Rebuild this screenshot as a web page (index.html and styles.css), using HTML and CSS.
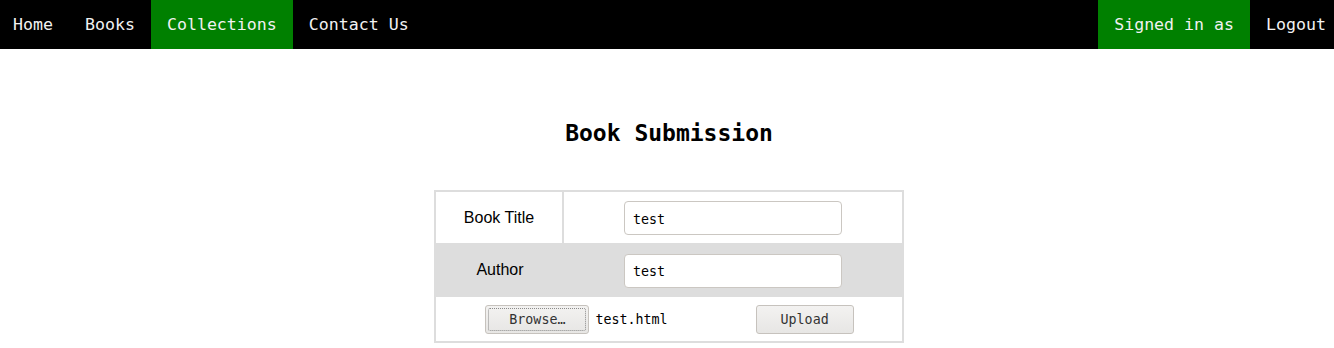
FILE: index.html
```html
<!DOCTYPE html>
<html lang="en">
<head>
<meta charset="utf-8">
<title>Book Submission</title>
<link rel="stylesheet" href="styles.css">
</head>
<body>
<nav class="topnav">
  <div class="nav-left">
    <a class="nav-link" href="#">Home</a>
    <a class="nav-link" href="#">Books</a>
    <a class="nav-link active" href="#">Collections</a>
    <a class="nav-link" href="#">Contact Us</a>
  </div>
  <div class="nav-right">
    <a class="nav-link active" href="#">Signed in as</a>
    <a class="nav-link" href="#">Logout</a>
  </div>
</nav>
<main class="content">
  <h2 class="page-title">Book Submission</h2>
  <form class="submit-form">
    <table class="form-table">
      <tr class="row row-title">
        <td class="label-cell divided">Book Title</td>
        <td class="field-cell"><input class="text-input" type="text" value="test"></td>
      </tr>
      <tr class="row row-author">
        <td class="label-cell">Author</td>
        <td class="field-cell"><input class="text-input" type="text" value="test"></td>
      </tr>
      <tr class="row row-upload">
        <td class="upload-cell" colspan="2">
          <div class="upload-line">
            <div class="file-picker">
              <span class="btn browse"><span class="focus-ring">Browse…</span></span>
              <span class="file-name">test.html</span>
            </div>
            <span class="btn upload">Upload</span>
          </div>
        </td>
      </tr>
    </table>
  </form>
</main>
</body>
</html>
```

FILE: styles.css
```css
html, body {
  margin: 0;
  padding: 0;
  background: #fff;
  overflow-x: hidden;
}

body {
  font-family: "DejaVu Sans Mono", monospace;
}

.topnav {
  display: flex;
  justify-content: space-between;
  background: #000;
  height: 49px;
  margin: 0 -8px 0 -3px;
}

.nav-left, .nav-right {
  display: flex;
}

.nav-link {
  display: block;
  padding: 0 16px;
  line-height: 49px;
  font-size: 16.6px;
  color: #f2f2f2;
  text-decoration: none;
  white-space: nowrap;
}

.nav-link.active {
  background: #008000;
}

.content {
  padding-left: 4px;
}

.page-title {
  margin: 70px 0 0;
  text-align: center;
  font-size: 23px;
  font-weight: bold;
  line-height: 28px;
  color: #000;
}

.submit-form {
  margin-top: 43px;
  display: flex;
  justify-content: center;
}

.form-table {
  width: 470px;
  border: 2px solid #ddd;
  border-collapse: separate;
  border-spacing: 0;
}

.form-table td {
  padding: 0;
  text-align: center;
  vertical-align: middle;
}

.row-title td { height: 51px; }
.row-author td { height: 54px; background: #ddd; }
.row-upload td { height: 44px; }

.label-cell {
  width: 126px;
  font-family: "Liberation Sans", Arial, sans-serif;
  font-size: 16px;
  line-height: 20px;
  color: #000;
}

.label-text {
  position: relative;
}

.label-cell.divided {
  border-right: 2px solid #ddd;
}

.text-input {
  display: block;
  margin: 1px auto 0;
  box-sizing: border-box;
  width: 218px;
  height: 34px;
  padding: 2px 8px 0;
  border: 1px solid #cbc7c2;
  border-radius: 4px;
  background: #fff;
  font-family: "DejaVu Sans Mono", monospace;
  font-size: 13.33px;
  color: #000;
}

.upload-line {
  display: flex;
  justify-content: center;
  align-items: center;
  gap: 88px;
  padding-left: 1px;
}

.file-picker {
  display: flex;
  align-items: center;
  gap: 6px;
}

.btn {
  display: flex;
  align-items: center;
  justify-content: center;
  box-sizing: border-box;
  height: 29px;
  border: 1px solid #c6c2bd;
  border-radius: 3px;
  background: linear-gradient(#f3f2f1, #e7e6e4);
  font-family: "DejaVu Sans Mono", monospace;
  font-size: 13.33px;
  color: #333;
  padding-top: 1px;
}

.browse {
  width: 104px;
  padding: 2px;
}

.focus-ring {
  display: flex;
  align-items: center;
  justify-content: center;
  width: 100%;
  height: 100%;
  box-sizing: border-box;
  border: 1px dotted #8a8a8a;
  border-radius: 2px;
  padding-top: 1px;
}

.upload {
  width: 98px;
}

.file-name {
  font-size: 13.33px;
  color: #000;
  padding-top: 1px;
}
```
